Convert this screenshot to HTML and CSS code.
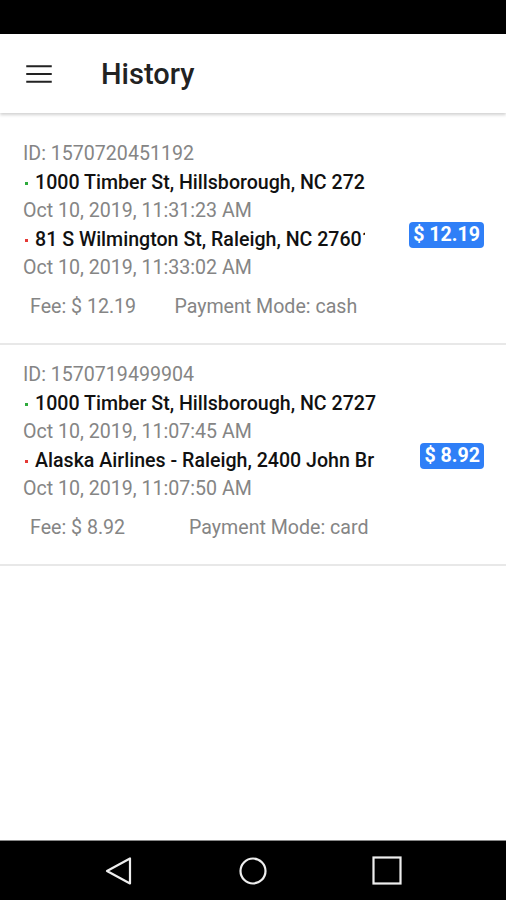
FILE: index.html
```html
<!DOCTYPE html>
<html lang="en">
<head>
  <meta charset="UTF-8">
  <meta name="viewport" content="width=device-width, initial-scale=1.0">
  <title>History</title>
  <link rel="stylesheet" href="styles.css">
</head>
<body>
  <div class="screen">
    <div class="status-bar"></div>

    <header class="app-bar">
      <svg class="menu-icon" width="34" height="34" viewBox="0 0 24 24">
        <path d="M3 6.5h18M3 12h18M3 17.5h18" stroke="#222" stroke-width="1.5" fill="none"/>
      </svg>
      <h1>History</h1>
    </header>

    <main class="list">
      <div class="ride">
        <div class="ride-info">
          <div class="muted">ID: 1570720451192</div>
          <div class="address"><span class="dot pickup"></span>1000 Timber St, Hillsborough, NC 272</div>
          <div class="muted">Oct 10, 2019, 11:31:23 AM</div>
          <div class="address"><span class="dot drop"></span>81 S Wilmington St, Raleigh, NC 27601</div>
          <div class="muted">Oct 10, 2019, 11:33:02 AM</div>
          <div class="fee-row muted">
            <span>Fee: $ 12.19</span>
            <span>Payment Mode: cash</span>
          </div>
        </div>
        <div class="badge">$ 12.19</div>
      </div>

      <div class="ride">
        <div class="ride-info">
          <div class="muted">ID: 1570719499904</div>
          <div class="address"><span class="dot pickup"></span>1000 Timber St, Hillsborough, NC 2727</div>
          <div class="muted">Oct 10, 2019, 11:07:45 AM</div>
          <div class="address"><span class="dot drop"></span>Alaska Airlines - Raleigh, 2400 John Br</div>
          <div class="muted">Oct 10, 2019, 11:07:50 AM</div>
          <div class="fee-row muted">
            <span>Fee: $ 8.92</span>
            <span>Payment Mode: card</span>
          </div>
        </div>
        <div class="badge">$ 8.92</div>
      </div>
    </main>

    <nav class="nav-bar">
      <svg width="30" height="30" viewBox="0 0 30 30">
        <path d="M26 2.5v25L3 15z" stroke="#eee" stroke-width="2.2" fill="none" stroke-linejoin="round"/>
      </svg>
      <svg width="30" height="30" viewBox="0 0 30 30">
        <circle cx="15" cy="15" r="12.5" stroke="#eee" stroke-width="2.2" fill="none"/>
      </svg>
      <svg width="30" height="30" viewBox="0 0 30 30">
        <rect x="1.5" y="1.5" width="27" height="26" stroke="#eee" stroke-width="2.2" fill="none"/>
      </svg>
    </nav>
  </div>
</body>
</html>
```

FILE: styles.css
```css
body {
  margin: 0;
  font-family: Roboto, "Liberation Sans", sans-serif;
  background: #fff;
}
.screen {
  height: 900px;
  display: flex;
  flex-direction: column;
  overflow: hidden;
}
.status-bar {
  height: 34px;
  background-color: #000;
}
.app-bar {
  height: 79px;
  display: flex;
  align-items: center;
  padding-left: 22px;
  background-color: #fff;
  box-shadow: 0 2px 3px rgba(0, 0, 0, 0.18);
  position: relative;
  z-index: 1;
}
.menu-icon {
  display: block;
}
.app-bar h1 {
  margin: 0 0 0 45px;
  font-size: 29px;
  font-weight: 500;
  color: #222;
}
.list {
  flex: 1;
  padding-top: 11px;
}
.ride {
  display: flex;
  align-items: center;
  padding: 16px 22px 22px 23px;
  border-bottom: 2px solid #e8e8e8;
}
.ride-info {
  flex: 1;
  min-width: 0;
  font-size: 19.6px;
  line-height: 28.5px;
}
.muted {
  color: #858585;
}
.address {
  white-space: nowrap;
  overflow: hidden;
  color: #111;
  font-weight: 500;
}
.dot {
  display: inline-block;
  width: 3px;
  height: 3px;
  margin: 0 7px 0 2px;
  vertical-align: middle;
}
.dot.pickup {
  background-color: #2eaa3c;
}
.dot.drop {
  background-color: #e53935;
}
.fee-row {
  display: flex;
  justify-content: space-between;
  margin-top: 10px;
  padding: 0 8px 0 7px;
}
.badge {
  margin: 9px 0 0 44px;
  padding: 0 4px;
  height: 26px;
  line-height: 26px;
  border-radius: 4px;
  background-color: #2f7ff7;
  color: #fff;
  font-size: 19.6px;
  font-weight: 700;
  white-space: nowrap;
}
.nav-bar {
  height: 60px;
  background-color: #000;
  border-top: 1px solid #888;
  box-sizing: border-box;
  display: flex;
  align-items: center;
  justify-content: space-between;
  padding: 0 104px 0 104px;
}
```
